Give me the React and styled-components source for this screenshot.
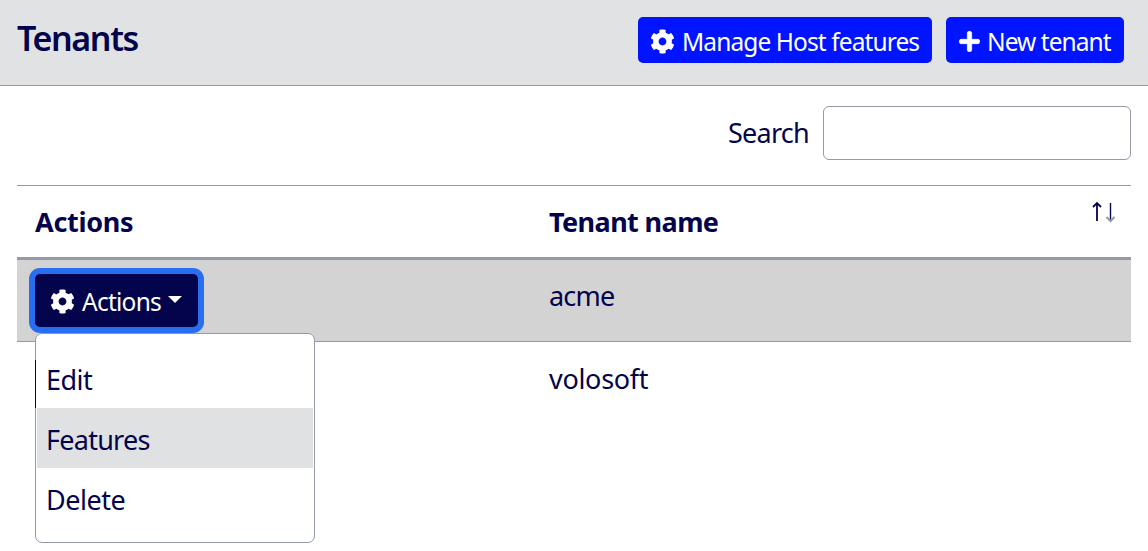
import React from "react";
import styled, { createGlobalStyle } from "styled-components";
import { FaCog, FaPlus } from "react-icons/fa";

const navy = "#04044c";
const line = "#959ba6";

const GlobalStyle = createGlobalStyle`
  * { box-sizing: border-box; }
  html, body { margin: 0; background: #fff; }
  body { overflow: hidden; color: ${navy}; font-family: "Noto Sans", "Open Sans", sans-serif; font-size: 27px; }
`;

const Page = styled.div`
  width: 1148px;
  height: 551px;
  overflow: hidden;
`;

const Label = styled.span`
  display: inline-block;
  white-space: nowrap;
  letter-spacing: ${(p) => p.$spacing || 0}px;
`;

const Header = styled.header`
  display: flex;
  align-items: flex-start;
  justify-content: space-between;
  height: 86px;
  padding: 17px 24px 0 17px;
  background: #e1e2e4;
  border-bottom: 1px solid ${line};
`;

const Title = styled.h1`
  margin: 0;
  font-size: 34px;
  font-weight: 600;
  line-height: 42px;
`;

const Toolbar = styled.div`
  display: flex;
  gap: 14px;
`;

const Button = styled.button`
  display: flex;
  align-items: center;
  width: ${(p) => p.$width}px;
  height: 46px;
  padding: 2px 0 0 12px;
  gap: ${(p) => p.$gap}px;
  border: 0;
  border-radius: 5px;
  background: #0014ff;
  color: #fff;
  font: 400 24.5px/44px "Noto Sans", "Open Sans", sans-serif;

  svg { flex: none; }
  ${Label} { padding-top: 1px; }
`;

const PlusIcon = styled(FaPlus)`
  stroke: #fff;
  stroke-width: 16px;
`;

const Content = styled.main`
  padding: 20px 17px 0;
`;

const SearchRow = styled.label`
  display: flex;
  justify-content: flex-end;
  align-items: center;
  gap: 14px;
  height: 54px;
  line-height: 52px;
  margin-bottom: 25px;
`;

const SearchInput = styled.input`
  width: 308px;
  height: 54px;
  border: 1px solid ${line};
  border-radius: 6px;
  background: #fff;
  outline: 0;
`;

const Row = styled.div`
  display: grid;
  grid-template-columns: 514px 1fr;
  height: ${(p) => p.$height}px;
  background: ${(p) => (p.$active ? "#d3d3d3" : "#fff")};
  border-bottom: ${(p) => p.$border || 0}px solid ${line};
`;

const HeadRow = styled(Row)`
  border-top: 1px solid ${line};
  font-weight: 700;
`;

const Cell = styled.div`
  display: flex;
  justify-content: space-between;
  padding: ${(p) => p.$top}px 16px 0 18px;
  line-height: 38px;
`;

const SortIcon = styled.svg`
  flex: none;
  margin-top: -2px;
`;

const Dropdown = styled.div`
  position: relative;
  height: 52px;
`;

const Toggle = styled(Button)`
  width: 163px;
  height: 53px;
  padding: 1px 0 0 15px;
  gap: 7px;
  background: ${navy};
  box-shadow: 0 0 0 6px #286ef0;
`;

const Caret = styled.span`
  margin: -4px 0 0 0;
  border: 7px solid transparent;
  border-top-color: #fff;
  border-bottom: 0;
`;

const Menu = styled.div`
  position: absolute;
  z-index: 1;
  top: 59px;
  left: 0;
  width: 280px;
  height: 210px;
  padding: 14px 1px 0;
  background: #fff;
  border: 1px solid ${line};
  border-radius: 7px;

  &::before {
    content: "";
    position: absolute;
    top: 26px;
    left: -1px;
    width: 1px;
    height: 48px;
    background: ${navy};
  }
`;

const MenuItem = styled.div`
  height: 60px;
  padding-left: 9px;
  line-height: 63px;
  background: ${(p) => (p.$active ? "#e0e1e2" : "transparent")};
`;

export default function App() {
  return (
    <Page>
      <GlobalStyle />
      <Header>
        <Title><Label $spacing={-1.4}>Tenants</Label></Title>
        <Toolbar>
          <Button $width={294} $gap={7}>
            <FaCog size={25} />
            <Label $spacing={-0.9}>Manage Host features</Label>
          </Button>
          <Button $width={178} $gap={6}>
            <PlusIcon size={23} />
            <Label $spacing={-0.95}>New tenant</Label>
          </Button>
        </Toolbar>
      </Header>
      <Content>
        <SearchRow>
          <Label $spacing={-0.75}>Search</Label>
          <SearchInput type="text" />
        </SearchRow>
        <HeadRow $height={75} $border={3}>
          <Cell $top={17}><Label $spacing={-0.3}>Actions</Label></Cell>
          <Cell $top={17}>
            <Label $spacing={-0.6}>Tenant name</Label>
            <SortIcon width="24" height="24" viewBox="0 0 24 24" fill="none">
              <path d="M6 20V2M2 6L6 2L10 6" stroke={navy} strokeWidth="1.8" />
              <path d="M19.5 2V19" stroke={navy} strokeWidth="1.4" />
              <path d="M15.5 16L19.5 20L23.5 16" stroke={line} strokeWidth="2" />
            </SortIcon>
          </Cell>
        </HeadRow>
        <Row $height={82} $active $border={1}>
          <Cell $top={14}>
            <Dropdown>
              <Toggle>
                <FaCog size={25} />
                <Label $spacing={-0.75}>Actions</Label>
                <Caret />
              </Toggle>
              <Menu>
                <MenuItem><Label $spacing={-0.5}>Edit</Label></MenuItem>
                <MenuItem $active><Label $spacing={-0.75}>Features</Label></MenuItem>
                <MenuItem><Label $spacing={-0.5}>Delete</Label></MenuItem>
              </Menu>
            </Dropdown>
          </Cell>
          <Cell $top={17}><Label $spacing={-0.8}>acme</Label></Cell>
        </Row>
        <Row $height={83}>
          <Cell $top={18} />
          <Cell $top={18}><Label $spacing={-0.3}>volosoft</Label></Cell>
        </Row>
      </Content>
    </Page>
  );
}
